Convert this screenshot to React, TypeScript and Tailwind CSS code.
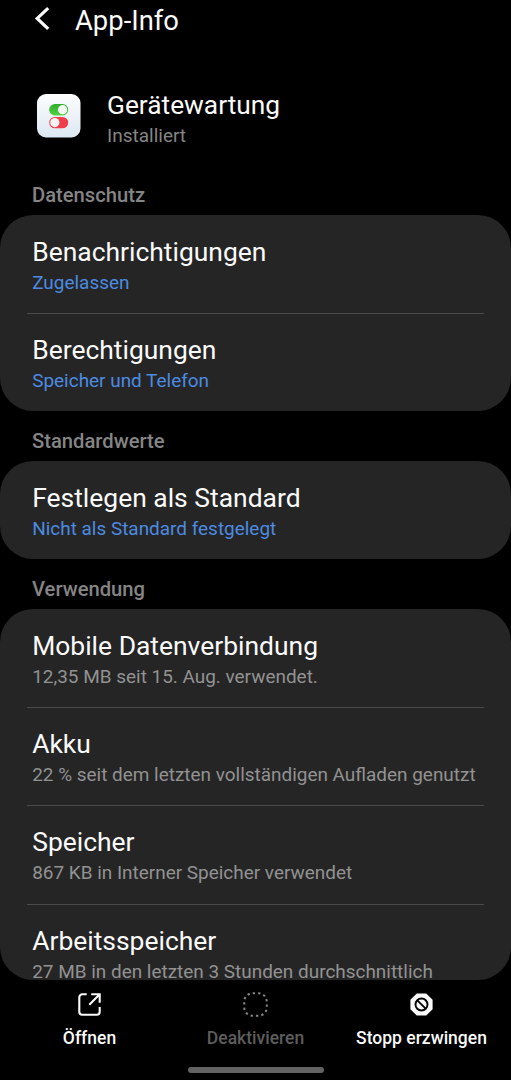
import type { ReactNode } from "react";

type Item = { title: string; detail: string };

function Row({ item, accent, first }: { item: Item; accent: boolean; first: boolean }) {
  return (
    <div className="relative h-[98.2px] shrink-0 pt-[21px] pl-[32.2px]">
      {!first && <div className="absolute top-0 left-[27px] h-px w-[457px] bg-[#4a4a4a]" />}
      <div className="h-8 text-[26.45px] leading-8 whitespace-nowrap text-[#fafafa]">{item.title}</div>
      <div
        className={
          "mt-[3px] h-6 text-[18.95px] leading-6 whitespace-nowrap " +
          (accent ? "text-[#4c8be0]" : "text-[#929292]")
        }
      >
        {item.detail}
      </div>
    </div>
  );
}

function Section({ name, items, accent = false }: { name: string; items: Item[]; accent?: boolean }) {
  return (
    <section className="flex shrink-0 flex-col">
      <h2 className="h-[49.8px] shrink-0 pt-[18px] pl-8 text-[20.2px] leading-6 font-medium text-[#858585]">{name}</h2>
      <div className="flex flex-col overflow-hidden rounded-[33px] bg-[#252525]">
        {items.map((item, i) => (
          <Row key={item.title} item={item} accent={accent} first={i === 0} />
        ))}
      </div>
    </section>
  );
}

function Action({ label, muted = false, children }: { label: string; muted?: boolean; children: ReactNode }) {
  return (
    <button
      className={
        "flex w-[166px] flex-col items-center pt-[10px] text-[17.5px] leading-5 font-medium whitespace-nowrap " +
        (muted ? "text-[#5d5d5d]" : "text-[#fafafa]")
      }
    >
      {children}
      <span className="mt-[9px]">{label}</span>
    </button>
  );
}

export default function App() {
  return (
    <div className="flex h-[1080px] w-[511px] flex-col overflow-hidden bg-black font-['Roboto',sans-serif]">
      <div className="flex h-[980px] shrink-0 flex-col overflow-hidden rounded-b-[33px]">
        <header className="flex h-[60px] shrink-0 items-start">
          <svg className="mt-[5px] ml-[34px] h-7 w-4" viewBox="0 0 16 28" fill="none" stroke="#fafafa" strokeWidth="3.2">
            <path d="M14.2 3.2 3.2 13.4l11 10.4" strokeLinejoin="miter" />
          </svg>
          <h1 className="mt-[5px] ml-[25px] text-[27.4px] leading-8 text-[#fafafa]">App-Info</h1>
        </header>
        <div className="flex h-[105px] shrink-0 pl-[37px]">
          <svg className="mt-[34px] h-[44px] w-[44px]" viewBox="0 0 44 44">
            <defs>
              <linearGradient id="tile" x1="0" y1="0" x2="0" y2="1">
                <stop offset="0" stopColor="#fdfefe" />
                <stop offset="1" stopColor="#dce8f2" />
              </linearGradient>
              <linearGradient id="green" x1="0" y1="0" x2="0" y2="1">
                <stop offset="0" stopColor="#2fad2b" />
                <stop offset="1" stopColor="#50d344" />
              </linearGradient>
            </defs>
            <rect width="43.5" height="43.5" rx="9" fill="url(#tile)" />
            <rect x="12.2" y="10" width="19" height="11.4" rx="5.7" fill="url(#green)" />
            <circle cx="25.6" cy="15.7" r="4.6" fill="#f6f8f8" />
            <rect x="12.2" y="22.9" width="19" height="11.4" rx="5.7" fill="#ef3f4c" />
            <circle cx="17.8" cy="28.6" r="4.6" fill="#fbf4f5" />
          </svg>
          <div className="pt-[29px] pl-[26px]">
            <div className="h-8 text-[26.3px] leading-8 text-[#fafafa]">Gerätewartung</div>
            <div className="mt-[3px] text-[19px] leading-6 text-[#858585]">Installiert</div>
          </div>
        </div>
        <Section
          name="Datenschutz"
          accent
          items={[
            { title: "Benachrichtigungen", detail: "Zugelassen" },
            { title: "Berechtigungen", detail: "Speicher und Telefon" },
          ]}
        />
        <Section
          name="Standardwerte"
          accent
          items={[{ title: "Festlegen als Standard", detail: "Nicht als Standard festgelegt" }]}
        />
        <Section
          name="Verwendung"
          items={[
            { title: "Mobile Datenverbindung", detail: "12,35 MB seit 15. Aug. verwendet." },
            { title: "Akku", detail: "22 % seit dem letzten vollständigen Aufladen genutzt" },
            { title: "Speicher", detail: "867 KB in Interner Speicher verwendet" },
            { title: "Arbeitsspeicher", detail: "27 MB in den letzten 3 Stunden durchschnittlich" },
          ]}
        />
      </div>
      <footer className="flex h-[87px] shrink-0 justify-center">
        <Action label="Öffnen">
          <svg className="h-[29px] w-[29px]" viewBox="0 0 29 29" fill="none" stroke="currentColor" strokeWidth="2.1">
            <path d="M11.7 4.3H7.3a3 3 0 0 0-3 3v14.4a3 3 0 0 0 3 3h14.4a3 3 0 0 0 3-3v-4.6" />
            <path d="M16.2 4.3h8.5v8.5M24.7 4.3 14.3 14.7" />
          </svg>
        </Action>
        <Action label="Deaktivieren" muted>
          <svg className="h-[29px] w-[29px]" viewBox="0 0 29 29" fill="none" stroke="#858585" strokeWidth="2">
            <rect x="3.2" y="3.2" width="22.6" height="22.6" rx="8.5" pathLength="84" strokeDasharray="2.6 3.4" />
          </svg>
        </Action>
        <Action label="Stopp erzwingen">
          <svg className="h-[29px] w-[29px]" viewBox="0 0 29 29">
            <path d="M9.8 3.4h9.4l6.4 6.4v9.4l-6.4 6.4H9.8l-6.4-6.4V9.8z" fill="currentColor" />
            <g fill="none" stroke="#050505" strokeWidth="1.9">
              <circle cx="14.5" cy="14.5" r="6" />
              <path d="m10.3 10.3 8.4 8.4" />
            </g>
          </svg>
        </Action>
      </footer>
      <div className="h-[6px] w-[136px] shrink-0 self-center rounded-full bg-[#636363]" />
    </div>
  );
}
